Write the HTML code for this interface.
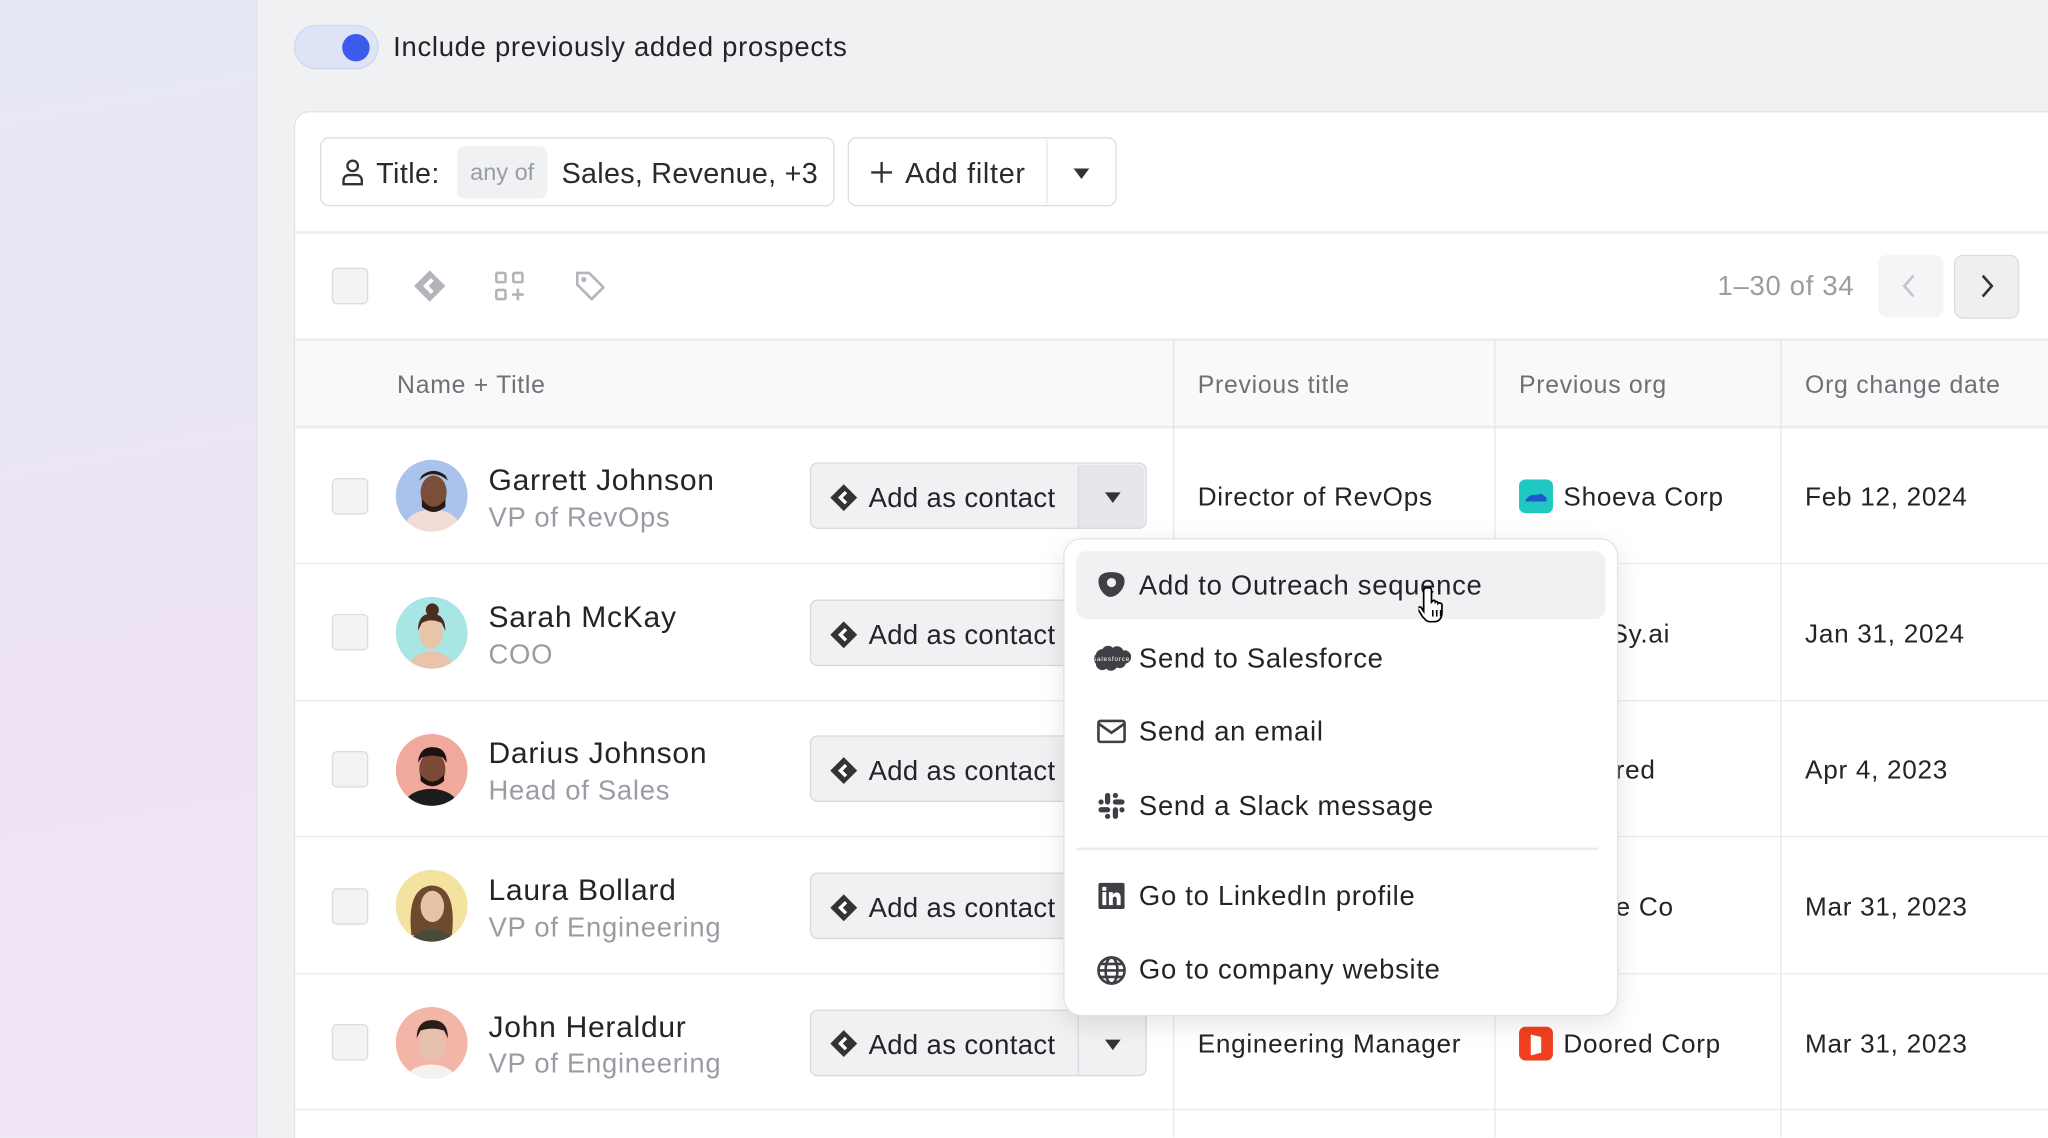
<!DOCTYPE html>
<html><head><meta charset="utf-8"><style>
*{box-sizing:border-box;margin:0;padding:0}
html,body{width:2048px;height:1138px;overflow:hidden;background:#f0f1f3}
#s{width:1568px;height:871px;transform:scale(1.30612);transform-origin:0 0;position:relative;font-family:"Liberation Sans",sans-serif;color:#2a2b2f;letter-spacing:0.55px}
.abs{position:absolute}
.left{left:0;top:0;width:197px;height:871px;background:linear-gradient(170deg,#e6e8f6 0%,#eee4f6 60%,#f1e6f8 100%);border-right:1px solid #e0e0e6}
.card{left:225px;top:85px;width:1400px;height:820px;background:#fff;border:1px solid #e2e3e6;border-radius:12px}
.hline{height:2px;background:#ececee;left:226px;width:1342px}
.vline{width:1px;background:#e6e6e8}
.cb{width:28px;height:28px;border:1.5px solid #dcdcdf;border-radius:4px;background:#f3f3f5}
.name{font-size:23px;color:#232428}
.sub{font-size:21px;color:#9a9ca3}
.btn{height:51px;border:1.5px solid #d8d9dc;background:#f0f1f3;border-radius:6px}
.cell{font-size:20px;color:#232428}
.hdr{font-size:19px;color:#6e7078}
.av{width:55px;height:55px;border-radius:50%;overflow:hidden}
.mi{left:872px;font-size:21px;color:#232428}
</style></head><body><div id="s">
<div class="abs left"></div>
<div class="abs" style="left:225px;top:19px;width:65px;height:34px;border-radius:17px;background:#dfe3f6;border:1px solid #d1d6ee"></div>
<div class="abs" style="left:262px;top:26px;width:21px;height:21px;border-radius:50%;background:#3b5bea"></div>
<div class="abs" style="left:301px;top:25px;font-size:21px;color:#232428">Include previously added prospects</div>
<div class="abs card"></div>
<div class="abs" style="left:245px;top:105px;width:394px;height:53px;border:1.5px solid #dcdde0;border-radius:7px"></div>
<svg class="abs" style="left:259px;top:120px" width="22" height="24" viewBox="0 0 22 24"><circle cx="11" cy="7" r="4" fill="none" stroke="#333" stroke-width="1.8"/><path d="M4 21v-3a4 4 0 0 1 4-4h6a4 4 0 0 1 4 4v3z" fill="none" stroke="#333" stroke-width="1.8"/></svg>
<div class="abs" style="left:288px;top:120px;font-size:22px;letter-spacing:0.3px">Title:</div>
<div class="abs" style="left:350px;top:112px;width:69px;height:40px;background:#f0f1f3;border-radius:6px;font-size:18px;color:#9a9ca3;text-align:center;line-height:40px;letter-spacing:0">any of</div>
<div class="abs" style="left:430px;top:120px;font-size:22px;letter-spacing:0.2px">Sales, Revenue, +3</div>
<div class="abs" style="left:649px;top:105px;width:206px;height:53px;border:1.5px solid #dcdde0;border-radius:7px"></div>
<div class="abs" style="left:801px;top:107px;width:1px;height:49px;background:#e4e4e6"></div>
<svg class="abs" style="left:665px;top:122px" width="20" height="20"><path d="M10 2v16M2 10h16" stroke="#333" stroke-width="1.8"/></svg>
<div class="abs" style="left:693px;top:120px;font-size:22px">Add filter</div>
<svg class="abs" style="left:820px;top:127px" width="16" height="12"><path d="M2 2h12l-6 8z" fill="#333"/></svg>
<div class="abs hline" style="top:177px"></div>
<div class="abs cb" style="left:254px;top:205px"></div>
<svg class="abs" style="left:315px;top:205px" width="28" height="28" viewBox="0 0 28 28"><path d="M14 2L26 14L14 26L2 14Z" fill="#b4b5ba"/><path d="M16 9l-5 5 5 5" fill="none" stroke="#fff" stroke-width="3"/></svg>
<svg class="abs" style="left:378px;top:207px" width="26" height="26" viewBox="0 0 26 26" fill="none" stroke="#b4b5ba" stroke-width="2"><rect x="2" y="2" width="7" height="7" rx="1"/><rect x="15" y="2" width="7" height="7" rx="1"/><rect x="2" y="15" width="7" height="7" rx="1"/><path d="M18.5 14v9M14 18.5h9"/></svg>
<svg class="abs" style="left:440px;top:206px" width="26" height="26" viewBox="0 0 26 26" fill="none" stroke="#b4b5ba" stroke-width="2"><path d="M2 3v9l11 11 9-9L11 3z" stroke-linejoin="round"/><circle cx="7" cy="8" r="1" fill="#b4b5ba"/></svg>
<div class="abs" style="left:1315px;top:208px;font-size:21px;color:#9a9ca3">1–30 of 34</div>
<div class="abs" style="left:1438px;top:195px;width:50px;height:48px;border-radius:7px;background:#f5f5f7"></div>
<svg class="abs" style="left:1452px;top:208px" width="20" height="22"><path d="M13 3l-7 8 7 8" fill="none" stroke="#c4c5ca" stroke-width="2"/></svg>
<div class="abs" style="left:1496px;top:195px;width:50px;height:49px;border-radius:7px;background:#eeeff1;border:1.5px solid #dcdde0"></div>
<svg class="abs" style="left:1511px;top:208px" width="20" height="22"><path d="M7 3l7 8-7 8" fill="none" stroke="#333" stroke-width="2"/></svg>
<div class="abs" style="left:226px;top:260px;width:1342px;height:67px;background:#f9f9fa"></div>
<div class="abs hline" style="top:259px"></div>
<div class="abs hline" style="top:326px"></div>
<div class="abs hdr" style="left:304px;top:285px">Name + Title</div>
<div class="abs hdr" style="left:917px;top:285px">Previous title</div>
<div class="abs hdr" style="left:1163px;top:285px">Previous org</div>
<div class="abs hdr" style="left:1382px;top:285px">Org change date</div>
<div class="abs vline" style="left:898px;top:260px;height:611px"></div>
<div class="abs vline" style="left:1144px;top:260px;height:611px"></div>
<div class="abs vline" style="left:1363px;top:260px;height:611px"></div>
<div class="abs hline" style="top:431px;height:1px"></div>
<div class="abs hline" style="top:536px;height:1px"></div>
<div class="abs hline" style="top:640px;height:1px"></div>
<div class="abs hline" style="top:745px;height:1px"></div>
<div class="abs hline" style="top:849px;height:1px"></div>

<div class="abs cb" style="left:254px;top:366px"></div>
<svg class="abs av" style="left:303px;top:352px" viewBox="0 0 55 55"><rect width="55" height="55" fill="#a9c3ec"/><ellipse cx="28" cy="50" rx="20" ry="12" fill="#f1dcd6"/><ellipse cx="29" cy="25" rx="10" ry="13" fill="#7a4e38"/><path d="M18 16q10-10 22 0l-2-4q-9-7-18 0z" fill="#2a1a12"/><path d="M20 30q9 12 18 0v6q-9 8-18 0z" fill="#2a1a12"/></svg>
<div class="abs name" style="left:374px;top:354px">Garrett Johnson</div>
<div class="abs sub" style="left:374px;top:385px">VP of RevOps</div>

<div class="abs cb" style="left:254px;top:470px"></div>
<svg class="abs av" style="left:303px;top:457px" viewBox="0 0 55 55"><rect width="55" height="55" fill="#a8e6e4"/><ellipse cx="27" cy="52" rx="16" ry="10" fill="#e8c4ab"/><ellipse cx="27" cy="28" rx="9" ry="12" fill="#e8c4ab"/><path d="M17 26q0-14 11-13 10 0 10 13l-3-6q-8-4-15 0z" fill="#4a2e20"/><circle cx="28" cy="10" r="5" fill="#4a2e20"/></svg>
<div class="abs name" style="left:374px;top:459px">Sarah McKay</div>
<div class="abs sub" style="left:374px;top:490px">COO</div>

<div class="abs cb" style="left:254px;top:575px"></div>
<svg class="abs av" style="left:303px;top:562px" viewBox="0 0 55 55"><rect width="55" height="55" fill="#f0a99a"/><ellipse cx="27" cy="54" rx="20" ry="12" fill="#1c1c1e"/><ellipse cx="28" cy="27" rx="10" ry="13" fill="#7a4a36"/><path d="M17 22q1-12 11-12 11 0 11 12l-3-4q-8-3-16 0z" fill="#1c1210"/><path d="M19 31q9 11 18 0v5q-9 8-18 0z" fill="#1c1210"/></svg>
<div class="abs name" style="left:374px;top:563px">Darius Johnson</div>
<div class="abs sub" style="left:374px;top:594px">Head of Sales</div>

<div class="abs cb" style="left:254px;top:680px"></div>
<svg class="abs av" style="left:303px;top:666px" viewBox="0 0 55 55"><rect width="55" height="55" fill="#f3e2a0"/><path d="M12 50q-4-36 15-38 20 0 16 38z" fill="#6e4a2c"/><ellipse cx="28" cy="28" rx="9" ry="12" fill="#e7c2a8"/><ellipse cx="28" cy="54" rx="16" ry="8" fill="#4a4a3a"/></svg>
<div class="abs name" style="left:374px;top:668px">Laura Bollard</div>
<div class="abs sub" style="left:374px;top:699px">VP of Engineering</div>

<div class="abs cb" style="left:254px;top:784px"></div>
<svg class="abs av" style="left:303px;top:771px" viewBox="0 0 55 55"><rect width="55" height="55" fill="#f3b5a8"/><ellipse cx="27" cy="54" rx="18" ry="10" fill="#f4f1ee"/><ellipse cx="28" cy="28" rx="10" ry="13" fill="#e6c2ae"/><path d="M16 24q0-14 12-14 12 0 12 14l-3-6q-9-3-18 0z" fill="#2a1e18"/></svg>
<div class="abs name" style="left:374px;top:773px">John Heraldur</div>
<div class="abs sub" style="left:374px;top:803px">VP of Engineering</div>

<div class="abs btn" style="left:620px;top:354px;width:258px"></div>
<div class="abs" style="left:825px;top:356px;width:51px;height:48px;background:#e6e7ea;border-left:1.5px solid #d8d9dc;border-radius:0 5px 5px 0"></div>
<svg class="abs" style="left:844px;top:375px" width="16" height="12"><path d="M2 2h12l-6 8z" fill="#333"/></svg>
<div class="abs btn" style="left:620px;top:459px;width:258px"></div>
<div class="abs btn" style="left:620px;top:563px;width:258px"></div>
<div class="abs btn" style="left:620px;top:668px;width:258px"></div>
<div class="abs btn" style="left:620px;top:773px;width:258px"></div>
<div class="abs" style="left:825px;top:775px;width:51px;height:48px;border-left:1.5px solid #d8d9dc"></div>
<svg class="abs" style="left:844px;top:794px" width="16" height="12"><path d="M2 2h12l-6 8z" fill="#333"/></svg>
<svg class="abs" style="left:634px;top:369px" width="24" height="24" viewBox="0 0 28 28"><path d="M14 2L26 14L14 26L2 14Z" fill="#333"/><path d="M16 9l-5 5 5 5" fill="none" stroke="#fff" stroke-width="3"/></svg>
<svg class="abs" style="left:634px;top:474px" width="24" height="24" viewBox="0 0 28 28"><path d="M14 2L26 14L14 26L2 14Z" fill="#333"/><path d="M16 9l-5 5 5 5" fill="none" stroke="#fff" stroke-width="3"/></svg>
<svg class="abs" style="left:634px;top:578px" width="24" height="24" viewBox="0 0 28 28"><path d="M14 2L26 14L14 26L2 14Z" fill="#333"/><path d="M16 9l-5 5 5 5" fill="none" stroke="#fff" stroke-width="3"/></svg>
<svg class="abs" style="left:634px;top:683px" width="24" height="24" viewBox="0 0 28 28"><path d="M14 2L26 14L14 26L2 14Z" fill="#333"/><path d="M16 9l-5 5 5 5" fill="none" stroke="#fff" stroke-width="3"/></svg>
<svg class="abs" style="left:634px;top:787px" width="24" height="24" viewBox="0 0 28 28"><path d="M14 2L26 14L14 26L2 14Z" fill="#333"/><path d="M16 9l-5 5 5 5" fill="none" stroke="#fff" stroke-width="3"/></svg>
<div class="abs cell" style="left:665px;top:370px;font-size:21px;letter-spacing:0.3px">Add as contact</div>
<div class="abs cell" style="left:665px;top:475px;font-size:21px;letter-spacing:0.3px">Add as contact</div>
<div class="abs cell" style="left:665px;top:579px;font-size:21px;letter-spacing:0.3px">Add as contact</div>
<div class="abs cell" style="left:665px;top:684px;font-size:21px;letter-spacing:0.3px">Add as contact</div>
<div class="abs cell" style="left:665px;top:789px;font-size:21px;letter-spacing:0.3px">Add as contact</div>

<div class="abs cell" style="left:917px;top:370px">Director of RevOps</div>
<div class="abs cell" style="left:917px;top:789px">Engineering Manager</div>
<svg class="abs" style="left:1163px;top:367px" width="26" height="26" viewBox="0 0 26 26"><rect width="26" height="26" rx="5" fill="#1fc8c0"/><path d="M5 16q3-5 8-4l4-1 4 3v3H5z" fill="#1f58c8"/></svg>
<div class="abs cell" style="left:1197px;top:370px">Shoeva Corp</div>
<div class="abs cell" style="left:1233px;top:475px">Sy.ai</div>
<div class="abs cell" style="left:1237px;top:579px">red</div>
<div class="abs cell" style="left:1237px;top:684px">e Co</div>
<svg class="abs" style="left:1163px;top:786px" width="26" height="26" viewBox="0 0 26 26"><rect width="26" height="26" rx="5" fill="#f0401f"/><path d="M9 6l8 2v12l-8 2z" fill="#fff"/></svg>
<div class="abs cell" style="left:1197px;top:789px">Doored Corp</div>
<div class="abs cell" style="left:1382px;top:370px">Feb 12, 2024</div>
<div class="abs cell" style="left:1382px;top:475px">Jan 31, 2024</div>
<div class="abs cell" style="left:1382px;top:579px">Apr 4, 2023</div>
<div class="abs cell" style="left:1382px;top:684px">Mar 31, 2023</div>
<div class="abs cell" style="left:1382px;top:789px">Mar 31, 2023</div>

<div class="abs" style="left:814px;top:412px;width:425px;height:366px;background:#fff;border:1px solid #e3e3e6;border-radius:14px;box-shadow:0 6px 20px rgba(0,0,0,.1)"></div>
<div class="abs" style="left:824px;top:422px;width:405px;height:52px;background:#f0f1f3;border-radius:8px"></div>
<div class="abs" style="left:824px;top:649px;width:400px;height:2px;background:#ececee"></div>
<svg class="abs" style="left:839px;top:437px" width="24" height="22" viewBox="0 0 24 22"><path d="M12 1C6 1 2 3 2 8c0 6 5 12 9 12 5 0 11-6 11-12 0-5-4-7-10-7z" fill="#3f4045"/><circle cx="12" cy="9" r="3.5" fill="#f0f1f3"/></svg>
<div class="abs mi" style="top:437px">Add to Outreach sequence</div>
<svg class="abs" style="left:836px;top:493px" width="30" height="22" viewBox="0 0 30 22"><path d="M8 4a5 5 0 0 1 8-1 5 5 0 0 1 8 2 5 5 0 0 1 2 10 5 5 0 0 1-7 3 5 5 0 0 1-8 1 5 5 0 0 1-8-4A5 5 0 0 1 3 8a5 5 0 0 1 5-4z" fill="#3f4045"/><text x="15" y="13" font-size="5" fill="#fff" text-anchor="middle" font-family="Liberation Sans">salesforce</text></svg>
<div class="abs mi" style="top:493px">Send to Salesforce</div>
<svg class="abs" style="left:839px;top:550px" width="24" height="20" viewBox="0 0 24 20" fill="none" stroke="#3f4045" stroke-width="2"><rect x="2" y="2" width="20" height="16" rx="1.5"/><path d="M2 4l10 7 10-7"/></svg>
<div class="abs mi" style="top:549px">Send an email</div>
<svg class="abs" style="left:840px;top:606px" width="22" height="22" viewBox="0 0 22 22" fill="#3f4045"><rect x="6" y="1" width="4" height="9" rx="2"/><rect x="12" y="12" width="4" height="9" rx="2"/><rect x="1" y="12" width="9" height="4" rx="2"/><rect x="12" y="6" width="9" height="4" rx="2"/><rect x="1" y="6" width="4" height="4" rx="2"/><rect x="17" y="12" width="4" height="4" rx="2"/><rect x="12" y="1" width="4" height="4" rx="2"/><rect x="6" y="17" width="4" height="4" rx="2"/></svg>
<div class="abs mi" style="top:606px">Send a Slack message</div>
<svg class="abs" style="left:840px;top:675px" width="22" height="22" viewBox="0 0 22 22"><rect x="1" y="1" width="20" height="20" rx="1.5" fill="#3f4045"/><rect x="4" y="8" width="3" height="10" fill="#fff"/><rect x="4" y="4" width="3" height="3" fill="#fff"/><path d="M9 8h3v2c1-2 6-3 6 2v6h-3v-5c0-2-3-2-3 0v5H9z" fill="#fff"/></svg>
<div class="abs mi" style="top:675px">Go to LinkedIn profile</div>
<svg class="abs" style="left:839px;top:731px" width="24" height="24" viewBox="0 0 24 24" fill="none" stroke="#3f4045" stroke-width="2"><circle cx="12" cy="12" r="10"/><ellipse cx="12" cy="12" rx="4.5" ry="10"/><path d="M2 12h20M4 7h16M4 17h16"/></svg>
<div class="abs mi" style="top:731px">Go to company website</div>
<svg class="abs" style="left:1086px;top:447px" width="30" height="32" viewBox="0 0 30 32"><path d="M8 3c1.5 0 2 1 2 2v9l1-1c1-1 2 0 2 1 1-1 2 0 2 1 1-1 3 0 3 1v6c0 4-2 7-6 7h-3c-3 0-4-2-6-4l-3-5c-1-1 0-3 2-2l2 3V5c0-1 1-2 2-2z" fill="#fff" stroke="#000" stroke-width="1.3"/><path d="M11 20v5M14 20v5M17 20v5" stroke="#000" stroke-width="1.2"/></svg>
</div></body></html>
